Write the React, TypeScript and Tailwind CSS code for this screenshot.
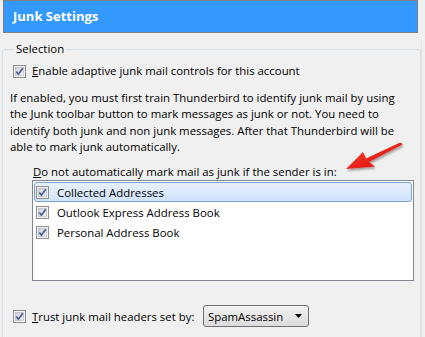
import React from 'react';

const font = { fontFamily: '"Open Sans", "Noto Sans", sans-serif' };

const Check = () => (
  <svg width="13" height="13" viewBox="0 0 13 13" className="shrink-0">
    <defs>
      <linearGradient id="cbg" x1="0" y1="0" x2="1" y2="1">
        <stop offset="0" stopColor="#cbcfd5" />
        <stop offset="1" stopColor="#f7f7f7" />
      </linearGradient>
    </defs>
    <rect x="0.5" y="0.5" width="12" height="12" fill="#f4f4f4" stroke="#8e8f8f" />
    <rect x="2.5" y="2.5" width="8" height="8" fill="url(#cbg)" stroke="#aeb3b9" strokeWidth="0.6" />
    <path d="M3.3 6.4 L5.4 9.2 L9.8 3.2" fill="none" stroke="#4a5f97" strokeWidth="1.7" strokeLinejoin="round" />
  </svg>
);

const Arrow = () => (
  <svg width="80" height="40" viewBox="0 0 80 40" className="absolute left-[336px] top-[138px] pointer-events-none">
    <defs>
      <linearGradient id="arr" x1="0" y1="0" x2="1" y2="1">
        <stop offset="0" stopColor="#ff4a3a" />
        <stop offset="1" stopColor="#d40000" />
      </linearGradient>
      <filter id="sh" x="-20%" y="-20%" width="150%" height="160%">
        <feDropShadow dx="1" dy="2" stdDeviation="1.2" floodColor="#000" floodOpacity="0.35" />
      </filter>
    </defs>
    <path
      d="M10 31 L27 14 L30 20.5 L63 5 Q66 4 66.5 6.5 L33 24 L39 28.5 Z"
      fill="url(#arr)"
      filter="url(#sh)"
    />
  </svg>
);

const items = ['Collected Addresses', 'Outlook Express Address Book', 'Personal Address Book'];

export default function App() {
  return (
    <div className="relative w-[425px] h-[337px] overflow-hidden bg-[#f0f0f0] text-[11.4px] text-black" style={font}>
      <div className="ml-[3px] w-[415px] h-[33px] border border-[#7f7f7f] bg-[#3399ff] flex items-center pl-[9px]">
        <span className="text-white font-bold text-[13px]">Junk Settings</span>
      </div>

      <fieldset className="ml-[2px] mt-[8px] w-[419px] h-[320px] border border-[#d5dfe5] rounded-[3px] pl-[7px]">
        <legend className="ml-[4px] px-[2px] leading-[16px]">Selection</legend>

        <div className="mt-[6px] ml-[3px] flex items-center gap-[6px] h-[16px] leading-[16px]">
          <Check />
          <span><span className="underline">E</span>nable adaptive junk mail controls for this account</span>
        </div>

        <div className="mt-[11px] leading-[16.33px] whitespace-nowrap">
          <div>If enabled, you must first train Thunderbird to identify junk mail by using</div>
          <div>the Junk toolbar button to mark messages as junk or not. You need to</div>
          <div>identify both junk and non junk messages. After that Thunderbird will be</div>
          <div>able to mark junk automatically.</div>
        </div>

        <div className="mt-[9px] ml-[23px] leading-[16px]">
          <span className="underline">D</span>o not automatically mark mail as junk if the sender is in:
        </div>

        <div className="ml-[22px] w-[382px] h-[101px] border border-[#828790] bg-white p-[1px]">
          {items.map((it, i) => (
            <div
              key={it}
              className={
                i === 0
                  ? 'h-[20px] flex items-center gap-[8px] pl-[1px] border border-[#7da2ce] rounded-[3px] bg-gradient-to-b from-[#e8f1fc] to-[#cfe3fb]'
                  : 'h-[20px] flex items-center gap-[8px] pl-[1px] border border-transparent'
              }
            >
              <Check />
              <span>{it}</span>
            </div>
          ))}
        </div>

        <div className="mt-[24px] ml-[3px] flex items-center h-[22px]">
          <Check />
          <span className="ml-[6px] w-[171px] shrink-0 whitespace-nowrap"><span className="underline">T</span>rust junk mail headers set by:</span>
          <div className="w-[106px] h-[22px] border border-[#707070] rounded-[3px] bg-gradient-to-b from-[#f2f2f2] to-[#dcdcdc] flex items-center pl-[4px] pr-[6px]">
            <span className="flex-1">SpamAssassin</span>
            <svg width="7" height="4" viewBox="0 0 7 4"><path d="M0 0 H7 L3.5 4 Z" fill="#000" /></svg>
          </div>
        </div>
      </fieldset>

      <div className="absolute right-0 top-[40px] w-[4px] h-[297px] border-l border-[#e3e3e3]" />
      <Arrow />
    </div>
  );
}
